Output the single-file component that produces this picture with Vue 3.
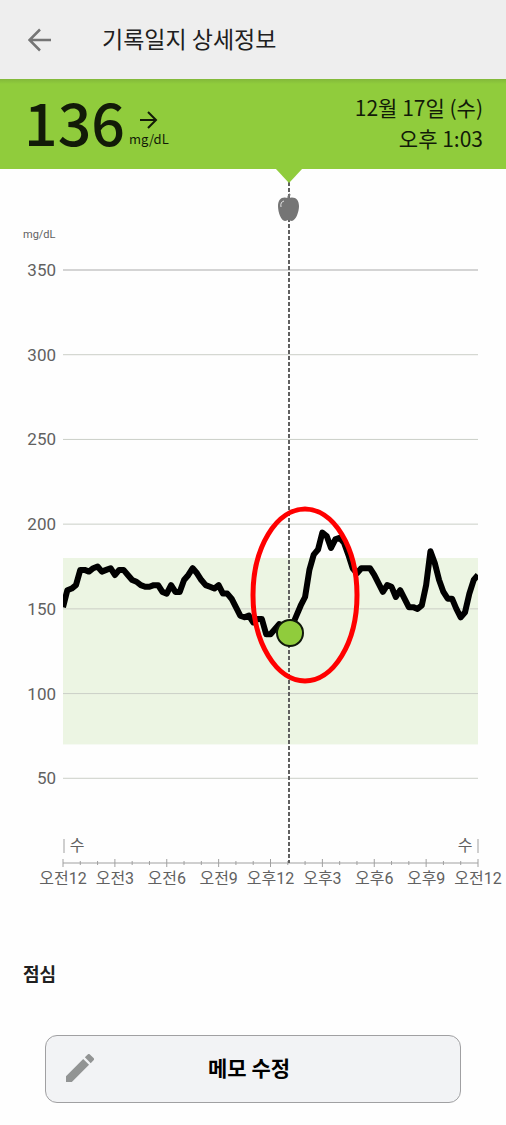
<script setup>
import { computed } from 'vue'

const plot = { left: 63, right: 478, top: 101, bottom: 694 }

// one reading every 15 minutes, from midnight to midnight
const readings = [
  151, 161, 162, 164, 173, 173, 172, 174, 175, 172, 173, 174,
  170, 173, 173, 170, 167, 166, 164, 163, 163, 164, 164, 160,
  159, 164, 160, 160, 167, 170, 174, 171, 167, 164, 163, 162,
  164, 159, 159, 156, 151, 146, 145, 146, 142, 144, 144, 135,
  135, 138, 141, 140, 139, 140, 146, 152, 157, 173, 182, 185,
  195, 193, 186, 191, 192, 189, 182, 174, 171, 174, 174, 174,
  170, 165, 160, 164, 163, 157, 161, 156, 151, 151, 150, 152,
  164, 184, 177, 167, 160, 156, 156, 150, 145, 148, 159, 167,
  170,
]

const levels = [350, 300, 250, 200, 150, 100, 50]
const times = ['오전12', '오전3', '오전6', '오전9', '오후12', '오후3', '오후6', '오후9', '오전12']

const xOf = (hour) => plot.left + (hour / 24) * (plot.right - plot.left)
const yOf = (value) => plot.top + ((350 - value) / 350) * (plot.bottom - plot.top)

const linePoints = computed(() =>
  readings.map((value, i) => `${xOf(i / 4)},${yOf(value)}`).join(' ')
)

const ticks = Array.from({ length: 25 }, (_, hour) => ({
  hour,
  size: hour % 3 === 0 ? 4 : 2,
}))
</script>

<template>
  <div class="page">
    <header class="app-bar">
      <button class="back-btn" type="button" aria-label="뒤로">
        <svg viewBox="0 0 24 24" width="24" height="24">
          <path d="M23 12H2M12 1.500L1.500 12L12 22.500" />
        </svg>
      </button>
      <h1 class="title">기록일지 상세정보</h1>
    </header>

    <section class="summary">
      <div class="reading">
        <span class="reading-value">136</span>
        <div class="reading-side">
          <svg class="trend" viewBox="0 0 18 18" width="18" height="18">
            <path d="M0 9H16M8 1L16 9L8 17" />
          </svg>
          <span class="reading-unit">mg/dL</span>
        </div>
      </div>
      <div class="date">
        <span>12월 17일 (수)</span>
        <span>오후 1:03</span>
      </div>
    </section>

    <svg class="chart" viewBox="0 0 506 741" role="img" aria-label="혈당 그래프">
      <defs>
        <clipPath id="plot-area">
          <rect :x="plot.left" y="0" :width="plot.right - plot.left" height="741" />
        </clipPath>
      </defs>

      <rect
        class="target"
        :x="plot.left"
        :y="yOf(180)"
        :width="plot.right - plot.left"
        :height="yOf(70) - yOf(180)"
      />

      <text class="unit" x="23" y="69">mg/dL</text>
      <g v-for="level in levels" :key="level">
        <line
          class="grid"
          :class="{ 'grid-top': level === 350 }"
          :x1="plot.left"
          :x2="plot.right"
          :y1="yOf(level)"
          :y2="yOf(level)"
        />
        <text class="level" x="56" :y="yOf(level) + 6">{{ level }}</text>
      </g>

      <g class="axis">
        <line :x1="plot.left" :x2="plot.right" y1="694" y2="694" />
        <line
          v-for="tick in ticks"
          :key="tick.hour"
          :x1="xOf(tick.hour)"
          :x2="xOf(tick.hour)"
          :y1="694 - tick.size"
          :y2="694 + tick.size"
        />
        <line x1="64" x2="64" y1="670" y2="684" />
        <line x1="478" x2="478" y1="670" y2="684" />
      </g>
      <text class="day" x="77" y="682" text-anchor="middle">수</text>
      <text class="day" x="465" y="682" text-anchor="middle">수</text>
      <text
        v-for="(time, i) in times"
        :key="i"
        class="time"
        :x="xOf(i * 3)"
        y="715"
      >{{ time }}</text>

      <line class="cursor" x1="289" x2="289" y1="13" y2="694" />
      <path class="pointer" d="M275 -1H303L289 14Z" />

      <path
        class="apple"
        d="M288 29C282 27 278 30 278 37C278 43 281 52 285 52C287 52 287 51 288 51C289 51 290 52 292 52C296 51 299 43 299 37C299 30 295 27 288 29Z"
      />
      <path class="apple-stem" d="M288 31Q288 27 290 25" />
      <path class="apple-shine" d="M281 38Q280 33 284 32" />

      <polyline class="line" :points="linePoints" clip-path="url(#plot-area)" />
      <circle class="marker" cx="290" cy="464" r="13" />
      <ellipse class="highlight" cx="305" cy="426" rx="52" ry="86" />
    </svg>

    <section class="note">
      <h2 class="note-title">점심</h2>
      <button class="edit-btn" type="button">
        <svg class="pencil" viewBox="3 3 18 18" width="28" height="28">
          <path d="M3 17.250V21h3.750L17.810 9.940l-3.750-3.750L3 17.250zM20.710 7.040a1 1 0 0 0 0-1.410l-2.340-2.340a1 1 0 0 0-1.410 0l-1.830 1.830 3.750 3.750 1.830-1.830z" />
        </svg>
        <span>메모 수정</span>
      </button>
    </section>
  </div>
</template>

<style>
body {
  margin: 0;
  background: #fefefe;
}
</style>

<style scoped>
.page {
  font-family: "Noto Sans CJK KR", sans-serif;
  color: #202020;
}

.app-bar {
  display: flex;
  align-items: center;
  gap: 48px;
  height: 79px;
  padding: 0 26px;
  box-sizing: border-box;
  background: #eeeeee;
}

.back-btn {
  display: flex;
  padding: 2px;
  border: none;
  background: none;
  cursor: pointer;
}

.back-btn path {
  fill: none;
  stroke: #757575;
  stroke-width: 2.5;
}

.title {
  margin: 0;
  padding-bottom: 3px;
  font-size: 23px;
  font-weight: 400;
  line-height: 32px;
}

.summary {
  display: flex;
  align-items: center;
  justify-content: space-between;
  height: 90px;
  padding: 0 23px 0 24px;
  background: linear-gradient(#82b83a, #90cc3c 5px);
  color: #121b08;
}

.reading {
  display: flex;
  align-items: center;
  gap: 4px;
}

.reading-value {
  padding-bottom: 6px;
  font-size: 59px;
  font-weight: 500;
  line-height: 84px;
}

.reading-side {
  display: flex;
  flex-direction: column;
  align-items: center;
  padding-top: 12px;
}

.trend path {
  fill: none;
  stroke: #121b08;
  stroke-width: 2;
}

.reading-unit {
  font-size: 13px;
  font-weight: 400;
  line-height: 20px;
}

.date {
  display: flex;
  flex-direction: column;
  padding-bottom: 2px;
  font-size: 21px;
  line-height: 31px;
  text-align: right;
}

.chart {
  display: block;
  width: 100%;
  overflow: visible;
}

.chart text {
  font-family: Roboto, "Noto Sans CJK KR", sans-serif;
  fill: #616161;
}

.chart .unit {
  font-size: 11px;
}

.chart .level {
  font-size: 17px;
  text-anchor: end;
}

.chart .day {
  font-size: 16px;
}

.chart .time {
  font-size: 16px;
  text-anchor: middle;
}

.target {
  fill: #ecf5e3;
}

.grid {
  stroke: #cbcfc7;
  stroke-width: 1;
}

.grid-top {
  stroke: #aaaaaa;
}

.axis line {
  stroke: #a0a0a0;
  stroke-width: 1;
}

.cursor {
  stroke: #606060;
  stroke-width: 2;
  stroke-dasharray: 4 2;
}

.pointer {
  fill: #90cc3c;
}

.apple {
  fill: #757575;
}

.apple-stem {
  fill: none;
  stroke: #757575;
  stroke-width: 2;
}

.apple-shine {
  fill: none;
  stroke: #e4e4e4;
  stroke-width: 1;
}

.line {
  fill: none;
  stroke: #000000;
  stroke-width: 6;
  stroke-linejoin: round;
}

.marker {
  fill: #90cc3c;
  stroke: #10180a;
  stroke-width: 2;
}

.highlight {
  fill: none;
  stroke: #ff0000;
  stroke-width: 5;
}

.note {
  padding: 49px 45px 22px;
}

.note-title {
  margin: 0 0 48px -22px;
  font-size: 18px;
  font-weight: 700;
  line-height: 28px;
}

.edit-btn {
  display: grid;
  grid-template-columns: 28px 1fr 36px;
  align-items: center;
  width: 100%;
  height: 68px;
  padding: 0 20px 2px;
  border: 1px solid #a0a0a2;
  border-radius: 12px;
  background: #f2f3f5;
  color: #000000;
  font-family: inherit;
  font-size: 21px;
  font-weight: 700;
  line-height: 30px;
  cursor: pointer;
}

.edit-btn span {
  padding-bottom: 2px;
}

.pencil {
  fill: #929494;
}
</style>
